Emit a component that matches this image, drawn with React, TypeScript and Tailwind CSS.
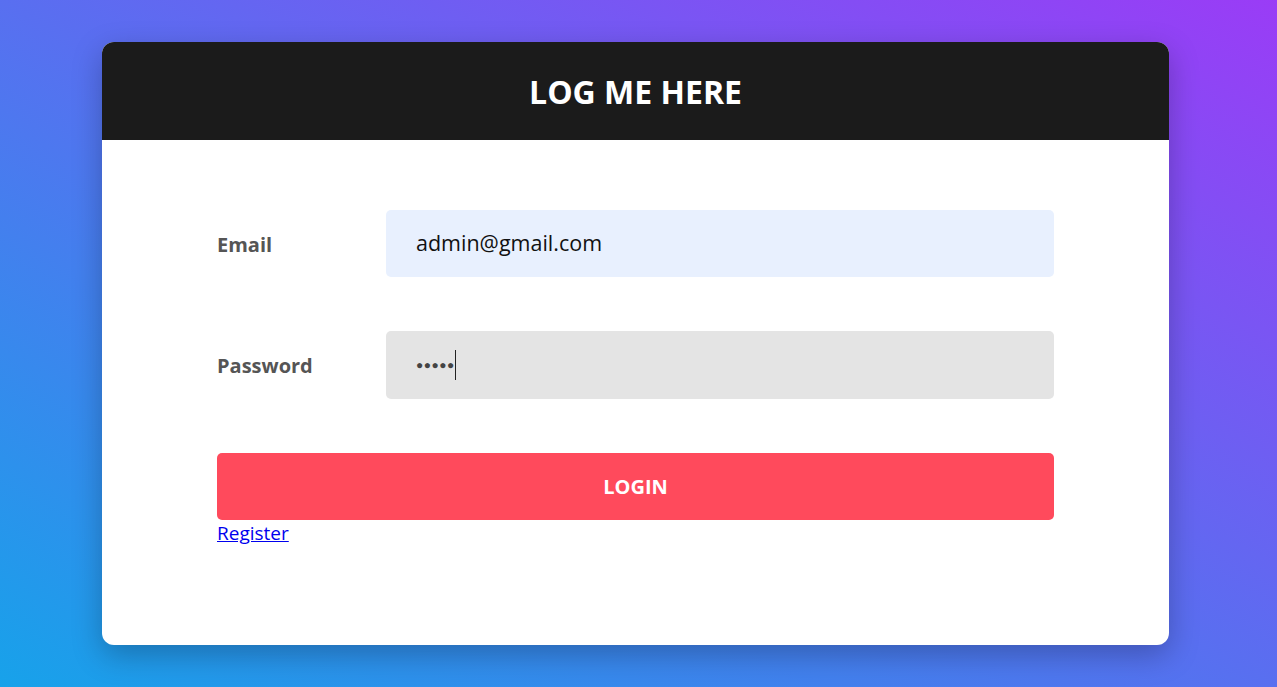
export default function App() {
  return (
    <div className="min-h-[687px] w-full bg-[linear-gradient(to_top_right,#17a2ea,#9a3cf6)] pt-[42px] pl-[102px] pb-[42px] font-['Open_Sans',sans-serif]">
      <div className="w-[1067px] h-[603px] rounded-[12px] bg-white overflow-hidden shadow-[0_10px_30px_rgba(0,0,0,0.25)]">
        {/* Header */}
        <div className="h-[98px] bg-[#1b1b1b] flex items-center justify-center pt-[2px]">
          <h1 className="text-[32px] font-bold text-white">LOG ME HERE</h1>
        </div>

        {/* Form */}
        <div className="px-[115px] pt-[70px]">
          <div className="flex items-center h-[67px]">
            <label className="w-[169px] text-[20px] font-bold text-[#555555] pt-[2px]">Email</label>
            <div className="flex-1 h-full rounded-[5px] bg-[#e8f0fe] flex items-center pl-[30px] text-[21.5px] text-[#111111]">
              admin@gmail.com
            </div>
          </div>

          <div className="flex items-center h-[68px] mt-[54px]">
            <label className="w-[169px] text-[20px] font-bold text-[#555555] pt-[2px]">Password</label>
            <div className="flex-1 h-full rounded-[5px] bg-[#e4e4e4] flex items-center pl-[30px] text-[20px] text-[#444444]">
              <span className="text-[12px] tracking-[0.5px] leading-none">●●●●●</span>
              <span className="w-[1.5px] h-[30px] bg-[#222]" />
            </div>
          </div>

          <button className="mt-[54px] w-full h-[67px] rounded-[5px] bg-[#ff4a5c] text-white text-[20px] font-bold">
            LOGIN
          </button>
          <a href="#" className="block w-fit text-[19px] leading-[26px] text-[#0000ee] underline">
            Register
          </a>
        </div>
      </div>
    </div>
  );
}
